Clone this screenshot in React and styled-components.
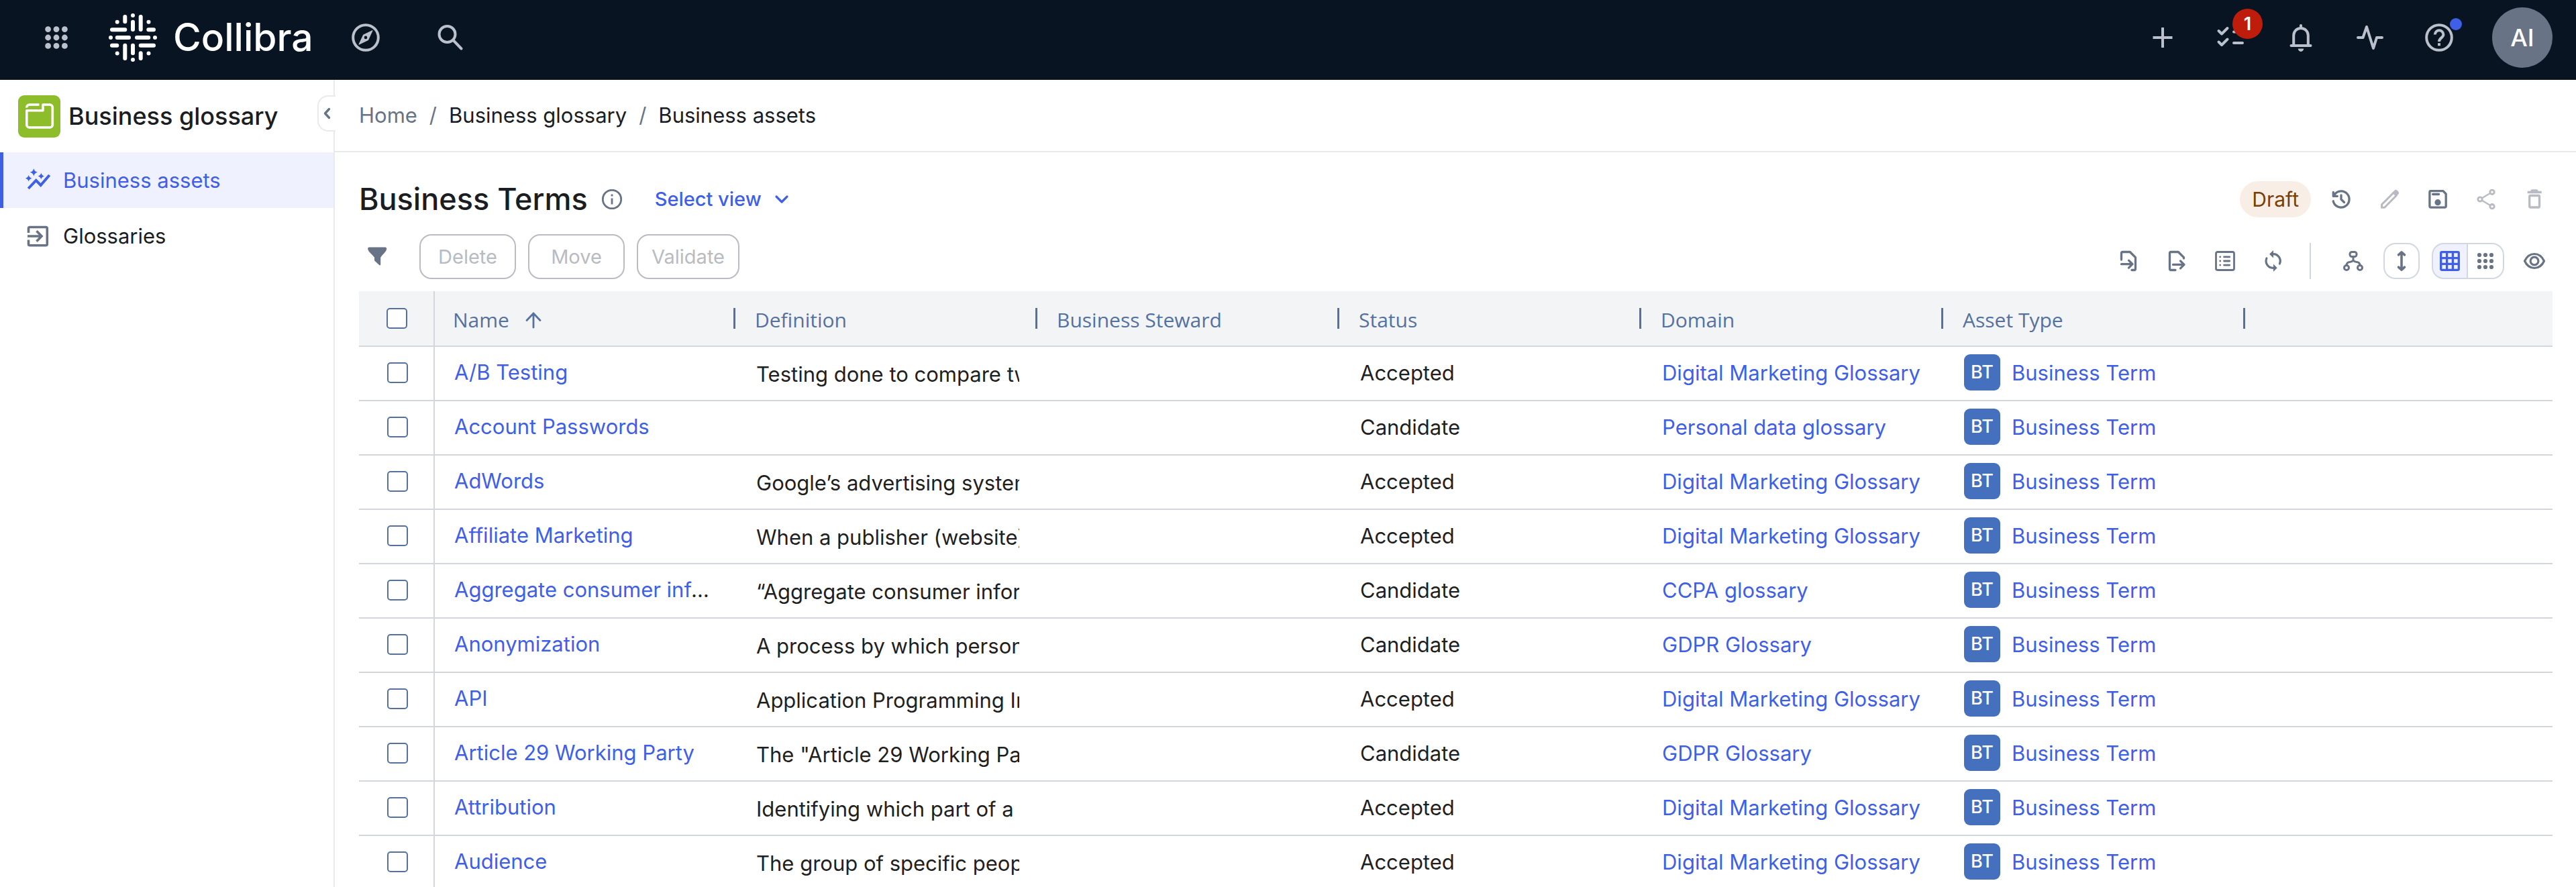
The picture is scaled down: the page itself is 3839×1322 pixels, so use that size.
import { useState } from "react";
import styled, { createGlobalStyle } from "styled-components";

const GlobalStyle = createGlobalStyle`
*, *::before, *::after {
  box-sizing: border-box;
}
body {
  margin: 0;
  background: #ffffff;
  color: #1a1d21;
  font-family: Inter, "Liberation Sans", sans-serif;
  font-size: 31px;
  font-weight: 400;
}
button, input {
  font-family: inherit;
}
a {
  text-decoration: none;
}
`;

const App = styled.div`
display: flex;
flex-direction: column;
height: 100vh;
overflow: hidden;
`;

const TopBar = styled.header`
display: flex;
flex: none;
align-items: center;
justify-content: space-between;
padding: 11px 35px 18px 57px;
background: #081421;
`;

const TopGroup = styled.div`
display: flex;
align-items: center;
gap: ${props => props.gap};
`;

const Brand = styled.a`
display: flex;
align-items: center;
gap: 24px;
color: #ffffff;
font-size: 57px;
font-weight: 500;
line-height: 72px;
`;

const IconButton = styled.button`
position: relative;
display: flex;
flex: none;
width: 54px;
height: 54px;
padding: 0;
border: 0;
background: none;
color: ${props => props.$color || '#687385'};
`;

const CountBadge = styled.span`
position: absolute;
top: -16px;
left: 28px;
width: 45px;
height: 45px;
border-radius: 50%;
background: #bf1d0c;
color: #ffffff;
font-size: 27px;
font-weight: 600;
line-height: 45px;
text-align: center;
`;

const NewDot = styled.span`
position: absolute;
top: -2px;
left: 43px;
width: 18px;
height: 18px;
border-radius: 50%;
background: #3f5fe6;
`;

const Avatar = styled.button`
width: 90px;
height: 90px;
padding: 0;
border: 0;
border-radius: 50%;
background: #687385;
color: #ffffff;
font-size: 36px;
font-weight: 500;
`;

const Body = styled.div`
display: flex;
flex: 1;
min-height: 0;
`;

const Sidebar = styled.nav`
position: relative;
flex: none;
width: 499px;
border-right: 2px solid #e9eaec;
`;

const SidebarTitle = styled.div`
display: flex;
align-items: center;
gap: 12px;
height: 108px;
padding-left: 27px;
font-size: 36px;
font-weight: 500;
`;

const CollapseButton = styled.button`
position: absolute;
top: 23px;
right: -3px;
display: flex;
width: 27px;
height: 54px;
padding: 0;
border: 2px solid #e9eaec;
border-right: 0;
border-radius: 16px 0 0 16px;
background: #ffffff;
color: #687385;
`;

const SidebarLink = styled.a`
display: flex;
align-items: center;
gap: 20px;
height: 83px;
padding-left: 33px;
border-left: 5px solid ${props => props.$active ? '#3f5fe6' : 'transparent'};
background: ${props => props.$active ? '#eff1fe' : 'none'};
color: ${props => props.$active ? '#3f5fe6' : '#1a1d21'};
svg {
  color: ${props => props.$active ? '#3f5fe6' : '#687385'};
}
`;

const Main = styled.main`
flex: 1;
min-width: 0;
`;

const Breadcrumb = styled.div`
display: flex;
align-items: center;
gap: 18px;
height: 108px;
padding-left: 36px;
padding-bottom: 2px;
border-bottom: 2px solid #e9eaec;
color: #687385;
a {
  color: #1a1d21;
}
a:first-child {
  color: #687385;
}
`;

const Content = styled.section`
padding: 43px 35px 0 36px;
`;

const Row = styled.div`
display: flex;
align-items: ${props => props.align || 'center'};
justify-content: space-between;
margin-bottom: ${props => props.$space};
`;

const Group = styled.div`
display: flex;
align-items: center;
gap: 18px;
`;

const Title = styled.h1`
margin: 0;
font-size: 45px;
font-weight: 500;
line-height: 54px;
`;

const TitleInfo = styled.span`
color: #687385;
`;

const SelectView = styled.button`
display: flex;
align-items: center;
gap: 20px;
margin-left: 10px;
padding: 0 18px;
border: 0;
background: none;
color: #3f5fe6;
font-size: 29px;
font-weight: 500;
line-height: 54px;
`;

const Draft = styled.span`
padding: 0 18px;
border-radius: 27px;
background: #f9eee6;
color: #7a3d08;
font-size: 30px;
line-height: 54px;
`;

const ActionButton = styled.button`
min-width: 144px;
height: 67px;
padding: 0 20px;
border: 2px solid #bbbcc3;
border-radius: 18px;
background: none;
color: #b9bbc2;
font-size: 29px;
`;

const Filter = styled.div`
margin-right: 18px;
`;

const Divider = styled.span`
width: 2px;
height: 54px;
margin: 0 18px 0 9px;
background: #d3d7df;
`;

const BorderedButton = styled(IconButton)`
border-radius: 18px;
box-shadow: inset 0 0 0 2px #d3d7df;
`;

const Segment = styled.div`
display: flex;
`;

const SegmentButton = styled(IconButton)`
border-radius: ${props => props.$last ? '0 18px 18px 0' : '18px 0 0 18px'};
border: 2px solid #d3d7df;
border-left-width: ${props => props.$last ? '0' : '2px'};
background: ${props => props.$active ? '#eff1fe' : '#ffffff'};
align-items: center;
justify-content: center;
svg {
  flex: none;
}
`;

const Table = styled.table`
width: 100%;
table-layout: fixed;
border-collapse: separate;
border-spacing: 0;
`;

const HeadCell = styled.th`
height: 83px;
padding: 0 0 0 27px;
border-bottom: 2px solid #d3d7dd;
background: #f3f4f6;
color: #5571a0;
font-family: "Open Sans", "Noto Sans", sans-serif;
font-size: 30px;
font-weight: 400;
text-align: left;
`;

const HeadContent = styled.div`
display: flex;
align-items: center;
gap: 24px;
height: 31px;
margin-right: 2px;
padding-top: 4px;
border-right: 3px solid #5571a0;
`;

const CheckCell = styled.td`
height: 81px;
padding: ${props => props.$head ? '0 0 0 1px' : '0 0 3px 3px'};
border-right: 2px solid #d3d7dd;
border-bottom: 2px solid #d3d7dd;
background: ${props => props.$head ? '#f3f4f6' : '#ffffff'};
text-align: center;
vertical-align: middle;
`;

const Checkbox = styled.input`
display: block;
appearance: none;
width: 31px;
height: 31px;
margin: 0 auto;
border: 2px solid #5571a0;
border-radius: 5px;
background: #ffffff;
&:checked {
  background: #5571a0;
}
`;

const Cell = styled.td`
height: 81px;
padding: 0 29px 3px 29px;
border-bottom: 2px solid #d3d7dd;
color: #1f1f1f;
white-space: nowrap;
vertical-align: middle;
`;

const Clip = styled.div`
overflow: hidden;
line-height: 40px;
padding-top: ${props => props.$ellipsis ? '0' : '5px'};
text-overflow: ${props => props.$ellipsis ? 'ellipsis' : 'clip'};
`;

const CellLink = styled.a`
color: #3f5fe6;
`;

const TypeWrap = styled.div`
display: flex;
align-items: center;
gap: 17px;
`;

const TypeBadge = styled.span`
width: 54px;
height: 54px;
border-radius: 9px;
background: #4470be;
color: #ffffff;
font-size: 27px;
font-weight: 500;
line-height: 54px;
text-align: center;
`;

const Svg = styled.svg`
display: block;
flex: none;
overflow: visible;
fill: none;
stroke: currentColor;
stroke-linecap: round;
stroke-linejoin: round;
.solid {
  fill: currentColor;
  stroke: none;
}
`;

const Icon = ({ size = 54, width = 3.3, children }) => (
  <Svg width={size} height={size} viewBox={`0 0 ${size} ${size}`} strokeWidth={width} aria-hidden="true">
    {children}
  </Svg>
);

const Dots = ({ step, r, x = 27 }) => (
  <Icon>
    {[-1, 0, 1].map((row) =>
      [-1, 0, 1].map((col) => (
        <circle key={`${row}${col}`} className="solid" cx={x + col * step} cy={27 + row * step} r={r} />
      ))
    )}
  </Icon>
);

const Logo = () => (
  <Icon size={72} width={6}>
    <path d="M24.3 5V12.3M36 3V3.01M36 12.7V24M47.7 5V24M12.7 12.7V12.71M59.5 12.7V12.71M12.7 59.5V59.51M59.5 59.5V59.51" />
    <path d="M5 24.3H24.3M59.3 24.3H67M3 36H3.01M12.7 36H30M42 36H59.3M69 36H69.01M5 47.7H12.3M47.7 47.7H67" />
    <path d="M24.3 47.7V67M36 47.7V59.3M36 69V69.01M47.7 59.3V67" />
  </Icon>
);

const CompassIcon = () => (
  <Icon width={4}>
    <circle cx="27" cy="27" r="18.8" />
    <path
      className="solid"
      fillRule="evenodd"
      d="M36.6 16.2c.5-.3 1 .2.8.8L31.2 30.4l-.8.8L17.4 37.6c-.6.3-1.1-.2-.8-.8L22.8 23.4l.8-.8ZM27 24.6a2.3 2.3 0 1 0 0 4.6 2.3 2.3 0 0 0 0-4.6Z"
    />
  </Icon>
);

const SearchIcon = () => (
  <Icon width={4}>
    <circle cx="22.5" cy="22" r="12" />
    <path d="M31.5 31L43.5 43.5" />
  </Icon>
);

const PlusIcon = () => (
  <Icon width={4}>
    <path strokeLinecap="butt" d="M27 12V42M12.5 27H41.5" />
  </Icon>
);

const TasksIcon = () => (
  <Icon width={4}>
    <path d="M7.5 17L12 21.5L20.5 13M7.5 33.5L12 38L20.5 29.5M30 18.5H43M30 35H43" />
  </Icon>
);

const BellIcon = () => (
  <Icon width={4}>
    <path d="M16.2 38V23.7a10.8 10.8 0 0 1 21.6 0V38M12.5 39H41.5M27 9V11" />
    <path className="solid" d="M22.8 43.5h8.4a4.2 4.4 0 0 1-8.4 0Z" />
  </Icon>
);

const ActivityIcon = () => (
  <Icon width={4}>
    <path d="M9 27H16.5L22 11L32 43L37 27H45" />
  </Icon>
);

const HelpIcon = () => (
  <Icon width={4}>
    <circle cx="27" cy="27" r="18.8" />
    <path strokeLinecap="butt" d="M20.8 22.5a6.3 6.3 0 0 1 12.6 0c0 4.8-6.4 5-6.4 10.5M27 35.2V39.2" />
  </Icon>
);

const GlossaryIcon = () => (
  <Icon size={63} width={3.6}>
    <rect width="63" height="63" rx="9" fill="#8dbd2b" stroke="none" />
    <g stroke="#ffffff">
      <path d="M12.8 44V22.8H37V14H47.3a4 4 0 0 1 4 4V44a4 4 0 0 1-4 4H16.8a4 4 0 0 1-4-4Z" />
      <path strokeLinecap="butt" d="M12.8 18.5a4 4 0 0 1 4-4.5H31.5" />
    </g>
  </Icon>
);

const star = (x, y, r) =>
  `M${x} ${y - r}Q${x + 1} ${y - 1} ${x + r} ${y}Q${x + 1} ${y + 1} ${x} ${y + r}Q${x - 1} ${y + 1} ${x - r} ${y}Q${x - 1} ${y - 1} ${x} ${y - r}Z`;

const AssetsIcon = () => (
  <Icon size={36} width={4}>
    <path className="solid" d={star(12.3, 5.8, 5.6) + star(4.7, 14.8, 4.8) + star(23.3, 11.5, 4.8)} />
    <path strokeLinecap="butt" strokeLinejoin="miter" d="M4.2 30L15.7 17.8L22.7 25L35.7 10" />
  </Icon>
);

const EnterIcon = () => (
  <Icon size={36} width={3.6}>
    <path strokeLinecap="butt" d="M4.5 13V6.5a2 2 0 0 1 2-2H30.3a2 2 0 0 1 2 2V29.8a2 2 0 0 1-2 2H6.5a2 2 0 0 1-2-2V23.5" />
    <path strokeLinecap="butt" strokeLinejoin="miter" d="M3 18H23M16.5 10.3L24 18L16.5 25.7" />
  </Icon>
);

const InfoIcon = () => (
  <Icon size={36} width={2.8}>
    <circle cx="18" cy="18" r="13.7" />
    <path strokeLinecap="butt" d="M18 16.5V25.5M18 10.5V13.5" />
  </Icon>
);

const FilterIcon = () => (
  <Icon>
    <path
      className="solid"
      d="M15 12.5h24.5a2 2 0 0 1 1.7 2c0 4-4 6.5-9 13.2v10.5a1.2 1.2 0 0 1-2 .9l-6.6-6a2 2 0 0 1-.6-1.4v-4C17.5 21 13.2 18.5 13.2 14.5a2 2 0 0 1 1.8-2Z"
    />
  </Icon>
);

const HistoryIcon = () => (
  <Icon>
    <path d="M15.2 29.8A12.1 12.1 0 1 0 17 20.2L15.3 22.4M15.3 16.3V22.4H21.3M27 21V27L31.5 31.5" />
  </Icon>
);

const PencilIcon = () => (
  <Icon width={3}>
    <path d="M15.5 39.2V34.8L33 17.3L37.2 21.5L19.8 39.2Z" />
    <path className="solid" d="M31.5 16.5L34.3 13.9a3.2 3.2 0 0 1 4.5 0L40 15.2a3.2 3.2 0 0 1 0 4.5L37.5 22.5Z" />
  </Icon>
);

const SaveIcon = () => (
  <Icon>
    <path d="M16.5 14.7H35L39.2 19V37.5a1.6 1.6 0 0 1-1.6 1.6H16.5a1.6 1.6 0 0 1-1.6-1.6V16.3a1.6 1.6 0 0 1 1.6-1.6ZM19.6 19.5H28.6" />
    <circle className="solid" cx="27" cy="31.7" r="4.6" />
  </Icon>
);

const ShareIcon = () => (
  <Icon width={2.8}>
    <circle cx="36" cy="16.3" r="3.2" />
    <circle cx="18" cy="27" r="3.2" />
    <circle cx="36" cy="37.7" r="3.2" />
    <path strokeWidth="2.2" d="M21 25.3L33 18M21 28.7L33 36" />
  </Icon>
);

const TrashIcon = () => (
  <Icon>
    <path strokeLinecap="butt" d="M16.7 16.5H37.7M22.5 15a2 1.5 0 0 1 2-1h5a2 1.5 0 0 1 2 1" />
    <rect x="19.7" y="21.5" width="14.8" height="17.5" rx="1.5" />
  </Icon>
);

const ImportIcon = () => (
  <Icon>
    <path d="M16.5 25V15.5a2 2 0 0 1 2-2H29.3L37.5 21.7V38.5a2 2 0 0 1-2 2H32" />
    <path d="M16.5 31.7H32.5M27.5 26.2L33 31.7L27.5 37.2" />
  </Icon>
);

const ExportIcon = () => (
  <Icon>
    <path d="M37.5 23V21.7L29.3 13.5H18.5a2 2 0 0 0-2 2V38.5a2 2 0 0 0 2 2H25" />
    <path d="M21.5 32.4H37M32.5 26.9L38 32.4L32.5 37.9" />
  </Icon>
);

const ListIcon = () => (
  <Icon width={2.8}>
    <rect x="13.5" y="13.5" width="27" height="27" rx="2.5" />
    <path d="M19.7 20.9V20.91M19.7 27V27.01M19.7 33.1V33.11M25.5 20.9H33.7M25.5 27H33.7M25.5 33.1H33.7" />
  </Icon>
);

const RefreshIcon = () => (
  <Icon width={3.2}>
    <path d="M26.7 16.7A10.3 10.3 0 0 1 36.4 31M26.7 37.3A10.3 10.3 0 0 1 16.9 23" />
    <path className="solid" d="M21 16.7L27 11V22.4ZM32.7 37.3L27 31.6V43Z" />
  </Icon>
);

const TreeIcon = () => (
  <Icon width={3}>
    <rect x="22" y="13.5" width="10" height="7" rx="3" />
    <circle cx="17" cy="37" r="3.5" />
    <circle cx="37" cy="37" r="3.5" />
    <path d="M27 20.5V26M27 26q-2 2.5-5 2.5c-3 0-5 2-5 5M27 26q2 2.5 5 2.5c3 0 5 2 5 5" />
  </Icon>
);

const HeightIcon = () => (
  <Icon width={3.6}>
    <path d="M27 14.5V39.5M22.5 17.8L27 13.8L31.5 17.8M22.5 36.2L27 40.2L31.5 36.2" />
  </Icon>
);

const GridIcon = () => (
  <Icon width={3.3}>
    <rect x="13.7" y="13.7" width="26.6" height="26.6" rx="1.5" />
    <path d="M22.6 14V40M31.4 14V40M14 22.6H40M14 31.4H40" />
  </Icon>
);

const EyeIcon = () => (
  <Icon width={3.2}>
    <path d="M12.5 27c3-6.5 8.5-10.5 14.5-10.5s11.5 4 14.5 10.5c-3 6.5-8.5 10.5-14.5 10.5s-11.5-4-14.5-10.5Z" />
    <circle cx="27" cy="27" r="5.9" />
  </Icon>
);

const columns = ["Name", "Definition", "Business Steward", "Status", "Domain", "Asset Type"];

const assets = [
  { name: "A/B Testing", definition: "Testing done to compare two versions", status: "Accepted", domain: "Digital Marketing Glossary" },
  { name: "Account Passwords", definition: "", status: "Candidate", domain: "Personal data glossary" },
  { name: "AdWords", definition: "Google’s advertising system", status: "Accepted", domain: "Digital Marketing Glossary" },
  { name: "Affiliate Marketing", definition: "When a publisher (website) promotes", status: "Accepted", domain: "Digital Marketing Glossary" },
  { name: "Aggregate consumer information", definition: "“Aggregate consumer information”", status: "Candidate", domain: "CCPA glossary" },
  { name: "Anonymization", definition: "A process by which personal data", status: "Candidate", domain: "GDPR Glossary" },
  { name: "API", definition: "Application Programming Interface", status: "Accepted", domain: "Digital Marketing Glossary" },
  { name: "Article 29 Working Party", definition: "The \"Article 29 Working Party\"", status: "Candidate", domain: "GDPR Glossary" },
  { name: "Attribution", definition: "Identifying which part of a campaign", status: "Accepted", domain: "Digital Marketing Glossary" },
  { name: "Audience", definition: "The group of specific people", status: "Accepted", domain: "Digital Marketing Glossary" },
];

export default function BusinessGlossary() {
  const [selected, setSelected] = useState([]);

  const toggle = (name) => {
    setSelected(selected.includes(name) ? selected.filter((item) => item !== name) : [...selected, name]);
  };

  const toggleAll = () => {
    setSelected(selected.length === assets.length ? [] : assets.map((item) => item.name));
  };

  return (
    <App>
      <GlobalStyle />
      <TopBar>
        <TopGroup gap="51px">
          <IconButton $color="#bac0cc" aria-label="Applications"><Dots step={12.4} r={4.4} /></IconButton>
          <Brand href="#home"><Logo />Collibra</Brand>
          <TopGroup gap="72px">
            <IconButton $color="#bac0cc" aria-label="Explore"><CompassIcon /></IconButton>
            <IconButton $color="#bac0cc" aria-label="Search"><SearchIcon /></IconButton>
          </TopGroup>
        </TopGroup>
        <TopGroup gap="52px">
          <TopGroup gap="49px">
            <IconButton $color="#bac0cc" aria-label="Create"><PlusIcon /></IconButton>
            <IconButton $color="#bac0cc" aria-label="Tasks"><TasksIcon /><CountBadge>1</CountBadge></IconButton>
            <IconButton $color="#bac0cc" aria-label="Notifications"><BellIcon /></IconButton>
            <IconButton $color="#bac0cc" aria-label="Activities"><ActivityIcon /></IconButton>
            <IconButton $color="#bac0cc" aria-label="Help"><HelpIcon /><NewDot /></IconButton>
          </TopGroup>
          <Avatar>AI</Avatar>
        </TopGroup>
      </TopBar>
      <Body>
        <Sidebar>
          <SidebarTitle><GlossaryIcon />Business glossary</SidebarTitle>
          <CollapseButton aria-label="Collapse sidebar">
            <Svg width="25" height="50" viewBox="0 0 25 50" strokeWidth="3.4"><path d="M15.5 18.5L9.5 25L15.5 31.5" /></Svg>
          </CollapseButton>
          <SidebarLink href="#assets" $active><AssetsIcon />Business assets</SidebarLink>
          <SidebarLink href="#glossaries"><EnterIcon />Glossaries</SidebarLink>
        </Sidebar>
        <Main>
          <Breadcrumb>
            <a href="#home">Home</a>
            <span>/</span>
            <a href="#glossary">Business glossary</a>
            <span>/</span>
            <a href="#assets">Business assets</a>
          </Breadcrumb>
          <Content>
            <Row $space="25px">
              <Group>
                <Title>Business Terms</Title>
                <TitleInfo><InfoIcon /></TitleInfo>
                <SelectView>
                  Select view
                  <Svg width="20" height="20" viewBox="0 0 20 20" strokeWidth="3.2"><path d="M2 6L10 14L18 6" /></Svg>
                </SelectView>
              </Group>
              <Group>
                <Draft>Draft</Draft>
                <IconButton aria-label="History"><HistoryIcon /></IconButton>
                <IconButton $color="#b9bbc2" aria-label="Edit" disabled><PencilIcon /></IconButton>
                <IconButton aria-label="Save"><SaveIcon /></IconButton>
                <IconButton $color="#b9bbc2" aria-label="Share" disabled><ShareIcon /></IconButton>
                <IconButton $color="#b9bbc2" aria-label="Remove view" disabled><TrashIcon /></IconButton>
              </Group>
            </Row>
            <Row $space="18px" align="flex-end">
              <Group>
                <Filter>
                  <IconButton aria-label="Filter"><FilterIcon /></IconButton>
                </Filter>
                <ActionButton disabled>Delete</ActionButton>
                <ActionButton disabled>Move</ActionButton>
                <ActionButton disabled>Validate</ActionButton>
              </Group>
              <Group>
                <IconButton aria-label="Import"><ImportIcon /></IconButton>
                <IconButton aria-label="Export"><ExportIcon /></IconButton>
                <IconButton aria-label="Columns"><ListIcon /></IconButton>
                <IconButton aria-label="Refresh"><RefreshIcon /></IconButton>
                <Divider />
                <IconButton aria-label="Hierarchy"><TreeIcon /></IconButton>
                <BorderedButton aria-label="Row height"><HeightIcon /></BorderedButton>
                <Segment>
                  <SegmentButton $active $color="#3f5fe6" aria-label="Table view"><GridIcon /></SegmentButton>
                  <SegmentButton $last aria-label="Tile view"><Dots step={9} r={3.1} /></SegmentButton>
                </Segment>
                <IconButton aria-label="Preview"><EyeIcon /></IconButton>
              </Group>
            </Row>
            <Table>
              <colgroup>
                <col width="113" />
                {columns.map((column) => <col key={column} width="450" />)}
                <col />
              </colgroup>
              <thead>
                <tr>
                  <CheckCell as="th" $head>
                    <Checkbox type="checkbox" aria-label="Select all" checked={selected.length === assets.length} onChange={toggleAll} />
                  </CheckCell>
                  {columns.map((column) => (
                    <HeadCell key={column} scope="col">
                      <HeadContent>
                        {column}
                        {column === "Name" && (
                          <Svg width="24" height="24" viewBox="0 0 24 24" strokeWidth="2.8"><path d="M12 2V23M2 12.5L12 2L22 12.5" /></Svg>
                        )}
                      </HeadContent>
                    </HeadCell>
                  ))}
                  <HeadCell as="td" />
                </tr>
              </thead>
              <tbody>
                {assets.map((item) => (
                  <tr key={item.name}>
                    <CheckCell>
                      <Checkbox type="checkbox" aria-label={item.name} checked={selected.includes(item.name)} onChange={() => toggle(item.name)} />
                    </CheckCell>
                    <Cell><Clip $ellipsis><CellLink href="#asset">{item.name}</CellLink></Clip></Cell>
                    <Cell><Clip>{item.definition}</Clip></Cell>
                    <Cell />
                    <Cell>{item.status}</Cell>
                    <Cell><CellLink href="#domain">{item.domain}</CellLink></Cell>
                    <Cell>
                      <TypeWrap>
                        <TypeBadge>BT</TypeBadge>
                        <CellLink href="#type">Business Term</CellLink>
                      </TypeWrap>
                    </Cell>
                    <Cell />
                  </tr>
                ))}
              </tbody>
            </Table>
          </Content>
        </Main>
      </Body>
    </App>
  );
}
